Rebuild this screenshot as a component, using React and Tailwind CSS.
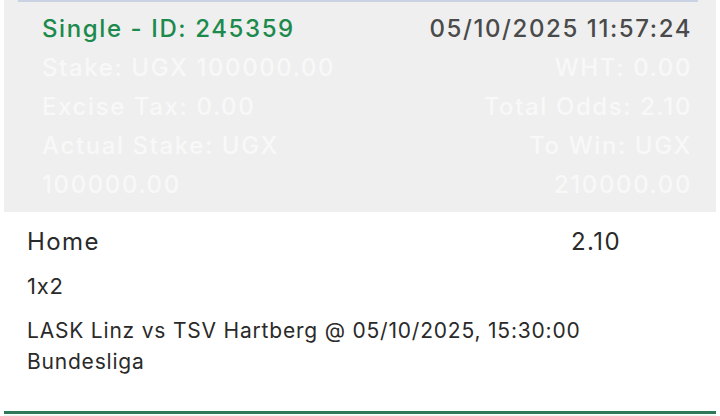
import React from 'react';

const rows = [
  ['Stake: UGX 100000.00', 'WHT: 0.00'],
  ['Excise Tax: 0.00', 'Total Odds: 2.10'],
  ['Actual Stake: UGX', 'To Win: UGX'],
  ['100000.00', '210000.00'],
];

const App = () => {
  return (
    <div className="w-[720px] h-[416px] bg-white overflow-hidden flex flex-col px-1">
      {/* Summary */}
      <div className="relative bg-[#efefef] h-[212px] pl-[38px] pr-[24px] pt-[9px] font-['Inter',sans-serif] font-medium text-[24px] tracking-[1.6px]">
        <div className="absolute left-[14px] right-[18px] top-0 h-[2px] bg-[#c9d3e3]" />
        <div className="flex justify-between h-[39px] items-center">
          <span className="text-[#1b8a4c]">Single - ID: 245359</span>
          <span className="text-[#4a4a4a]">05/10/2025 11:57:24</span>
        </div>
        {rows.map(([l, r]) => (
          <div key={l} className="flex justify-between h-[39px] items-center text-[#f8f8f8]">
            <span>{l}</span>
            <span>{r}</span>
          </div>
        ))}
      </div>

      {/* Selection */}
      <div className="flex-1 flex flex-col pl-[23px] pr-[95px] pt-[15px] font-['Inter',sans-serif] text-[#2a2a2a]">
        <div className="flex justify-between text-[24px] leading-[30px] tracking-[1.4px]">
          <span>Home</span>
          <span>2.10</span>
        </div>
        <div className="text-[22px] leading-[30px] mt-[14px] tracking-[0.8px]">1x2</div>
        <div className="text-[21px] leading-[31px] mt-[14px] tracking-[0.8px]">
          LASK Linz vs TSV Hartberg @ 05/10/2025, 15:30:00
          <br />
          Bundesliga
        </div>
      </div>
      <div className="h-[3px] bg-[#2e7a58] mb-[1px]" />
      <div className="h-[1px] bg-[#eaf5ee]" />
    </div>
  );
};

export default App;
